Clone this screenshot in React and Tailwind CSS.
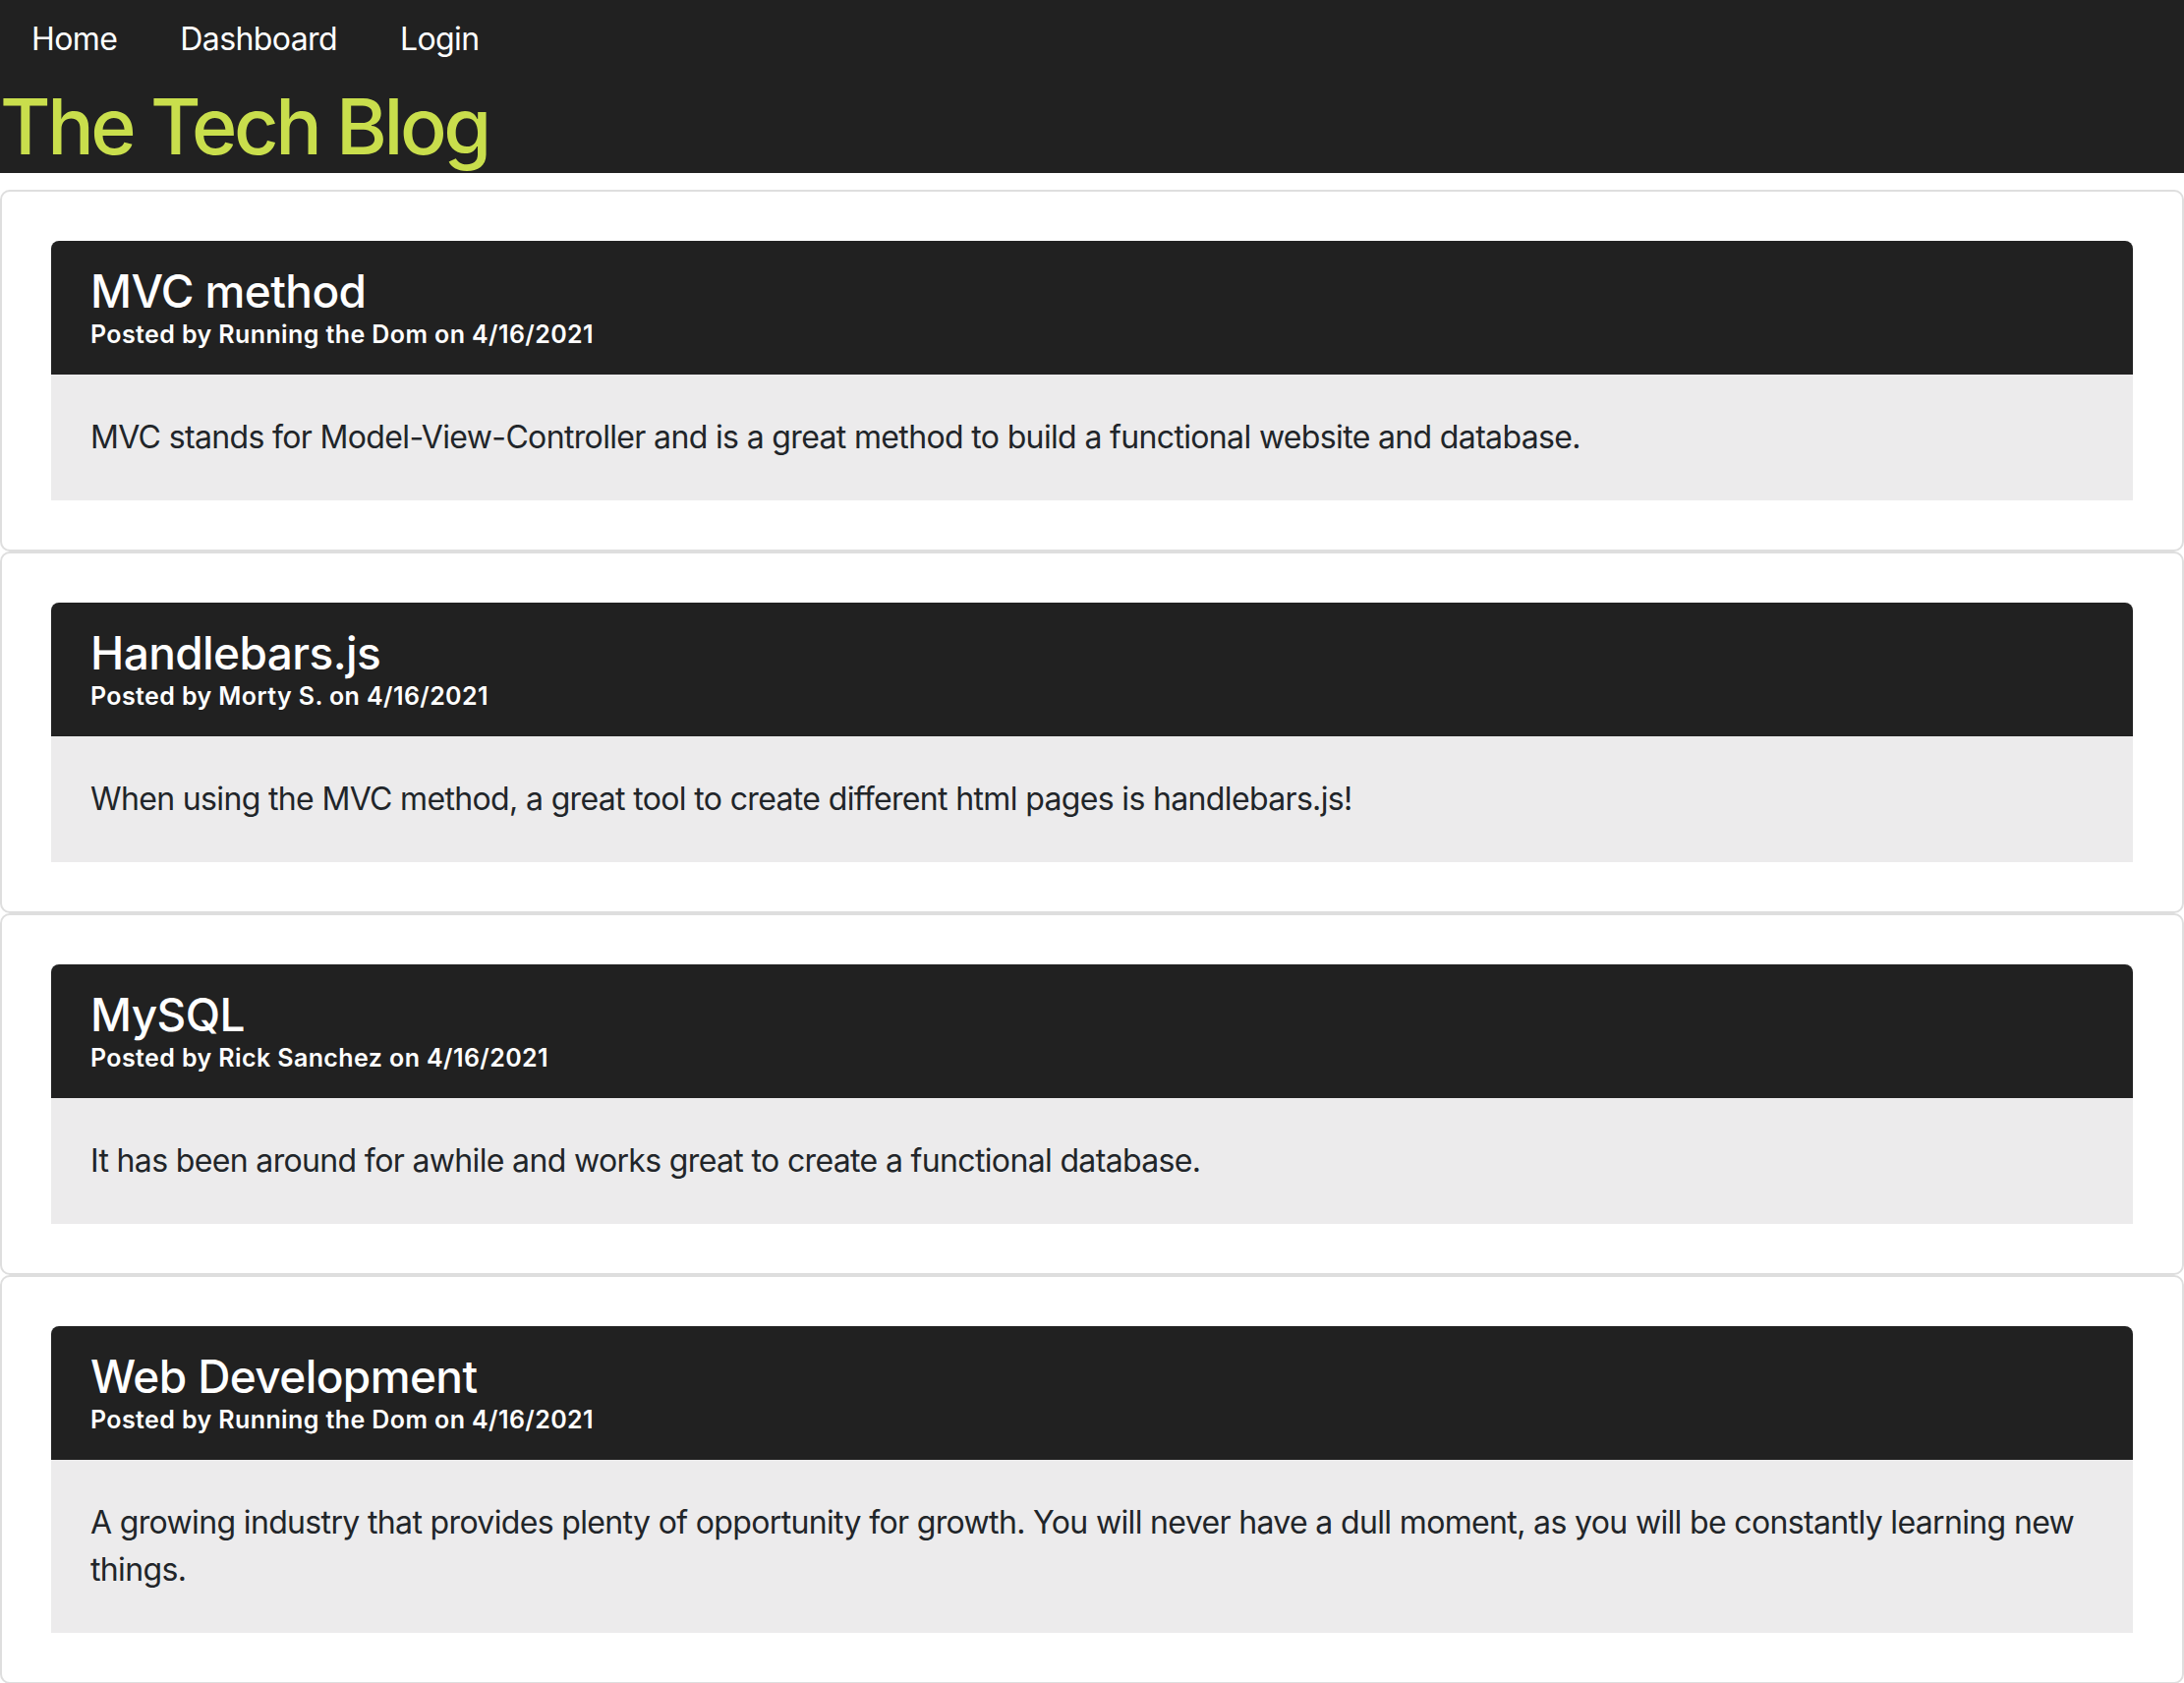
import React from "react";

const posts = [
  {
    title: "MVC method",
    author: "Running the Dom",
    date: "4/16/2021",
    body: "MVC stands for Model-View-Controller and is a great method to build a functional website and database.",
  },
  {
    title: "Handlebars.js",
    author: "Morty S.",
    date: "4/16/2021",
    body: "When using the MVC method, a great tool to create different html pages is handlebars.js!",
  },
  {
    title: "MySQL",
    author: "Rick Sanchez",
    date: "4/16/2021",
    body: "It has been around for awhile and works great to create a functional database.",
  },
  {
    title: "Web Development",
    author: "Running the Dom",
    date: "4/16/2021",
    body: "A growing industry that provides plenty of opportunity for growth. You will never have a dull moment, as you will be constantly learning new things.",
  },
];

export default function App() {
  return (
    <div className="min-h-screen bg-white font-['Inter','Liberation_Sans',sans-serif] text-[#212529]">
      <header className="bg-[#212121]">
        <nav className="flex">
          <a className="px-8 py-4 text-[32px] leading-[48px] tracking-[-0.6px] text-white">Home</a>
          <a className="px-8 py-4 text-[32px] leading-[48px] tracking-[-0.6px] text-white">Dashboard</a>
          <a className="px-8 py-4 text-[32px] leading-[48px] tracking-[-0.6px] text-white">Login</a>
        </nav>
        <h1 className="text-[79px] leading-[96px] font-medium text-[#c9de4c] tracking-[-3.4px]">
          The Tech Blog
        </h1>
      </header>
      <main className="mt-[17px]">
        {posts.map((p) => (
          <section
            key={p.title}
            className="border-2 border-[#dedede] rounded-[10px] p-[50px]"
          >
            <div className="bg-[#212121] rounded-t-[8px] px-10 pt-6 pb-[25px] text-white">
              <h2 className="text-[46px] leading-[55px] font-medium tracking-[-0.6px]">{p.title}</h2>
              <p className="text-[25px] leading-[32px] font-semibold tracking-[0.4px]">
                Posted by {p.author} on {p.date}
              </p>
            </div>
            <div className="bg-[#ecebec] px-10 py-10 text-[32px] leading-[48px] tracking-[-0.65px]">
              {p.body}
            </div>
          </section>
        ))}
      </main>
    </div>
  );
}
